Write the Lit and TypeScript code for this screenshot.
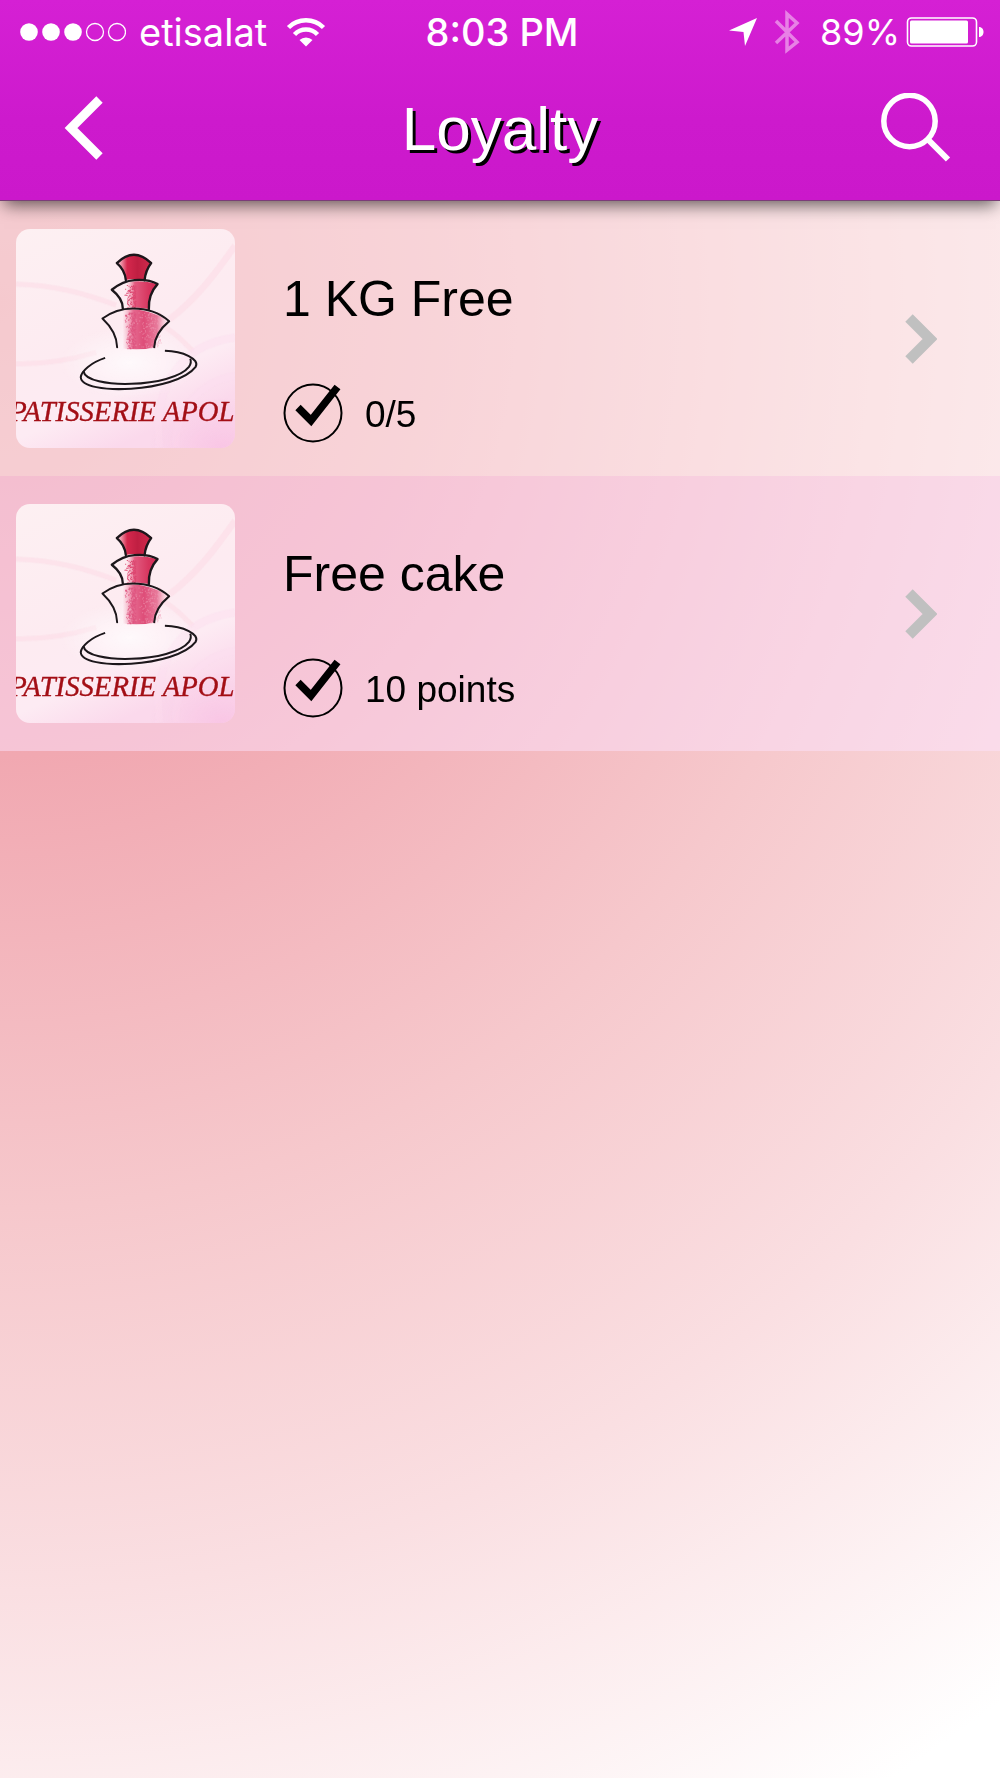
import { LitElement, html, svg, css } from "lit";
import { customElement, property } from "lit/decorators.js";

interface Reward {
  title: string;
  progress: string;
}

const REWARDS: Reward[] = [
  { title: "1 KG Free", progress: "0/5" },
  { title: "Free cake", progress: "10 points" },
];

/* Repeatable pseudo-random speckles for the grainy left edge of a cake tier. */
function speckles(x: number, y: number, w: number, h: number, count: number, seed: number) {
  let s = seed;
  const next = () => {
    s = (s * 1103515245 + 12345) % 2147483648;
    return s / 2147483648;
  };
  let d = "";
  for (let i = 0; i < count; i++) {
    const px = Math.round(x + w * Math.sqrt(next()));
    const py = Math.round(y + h * next());
    d += `M${px} ${py}h3v3h-3z`;
  }
  return d;
}

const TIER_TWO_GRAIN = speckles(324, 168, 34, 68, 150, 7);
const TIER_THREE_GRAIN = speckles(322, 248, 36, 110, 220, 19);
const TIER_LIGHT_GRAIN = speckles(344, 250, 90, 106, 160, 31);

@customElement("patisserie-logo")
export class PatisserieLogo extends LitElement {
  static styles = css`
    :host {
      display: block;
      flex: none;
      width: 219px;
      height: 219px;
      border-radius: 14px;
      overflow: hidden;
    }
    .art {
      display: block;
      width: 100%;
      height: 100%;
    }
    .name {
      font-family: "Liberation Serif", "Times New Roman", serif;
      font-style: italic;
      font-size: 86px;
      fill: #a30f16;
      stroke: #a30f16;
      stroke-width: 1px;
    }
  `;

  render() {
    return html`<svg class="art" viewBox="0 0 656 656" role="img" aria-label="Patisserie logo">
      ${svg`
      <defs>
        <linearGradient id="paper" x1="0" y1="0" x2="0.45" y2="1">
          <stop offset="0" stop-color="#fdf0f2"/>
          <stop offset="0.55" stop-color="#fdebf1"/>
          <stop offset="0.8" stop-color="#fdebf3"/>
          <stop offset="1" stop-color="#fbd9ec"/>
        </linearGradient>
        <radialGradient id="glow">
          <stop offset="0" stop-color="#fff" stop-opacity="0.7"/>
          <stop offset="1" stop-color="#fff" stop-opacity="0"/>
        </radialGradient>
        <radialGradient id="corner">
          <stop offset="0" stop-color="#f8bfe2" stop-opacity="0.75"/>
          <stop offset="1" stop-color="#f8bfe2" stop-opacity="0"/>
        </radialGradient>
        <linearGradient id="t1" x1="0" x2="1">
          <stop offset="0.05" stop-color="#f7c3cf"/>
          <stop offset="0.3" stop-color="#d5284d"/>
          <stop offset="0.6" stop-color="#c01f42"/>
          <stop offset="1" stop-color="#cf2a4c"/>
        </linearGradient>
        <linearGradient id="t2" x1="0" x2="1">
          <stop offset="0.32" stop-color="#f3a9bd" stop-opacity="0"/>
          <stop offset="0.5" stop-color="#e25b80"/>
          <stop offset="0.8" stop-color="#d7365f"/>
          <stop offset="1" stop-color="#d02c54"/>
        </linearGradient>
        <linearGradient id="t3" x1="0" x2="1">
          <stop offset="0.3" stop-color="#f3a9bd" stop-opacity="0"/>
          <stop offset="0.46" stop-color="#e56b90"/>
          <stop offset="0.62" stop-color="#de4d78"/>
          <stop offset="0.82" stop-color="#e87a9b"/>
          <stop offset="0.96" stop-color="#f5bccb" stop-opacity="0.3"/>
        </linearGradient>
      </defs>
      <rect width="656" height="656" fill="url(#paper)"/>
      <g fill="none" stroke="#fcdfe8" stroke-width="15" opacity="0.75">
        <path d="M0 165C120 168 210 195 300 228"/>
        <path d="M440 290C490 320 500 340 530 365"/>
        <path d="M0 404C80 406 170 390 240 370"/>
        <path d="M460 270C540 210 600 130 656 50" stroke-width="20"/>
        <path d="M430 656C410 500 470 350 656 325" stroke="#fbdcee" stroke-width="24" opacity="0.6"/>
        <path d="M480 656C470 560 540 460 656 440" stroke="#fbdcee" stroke-width="24" opacity="0.6"/>
      </g>
      <ellipse cx="620" cy="656" rx="220" ry="150" fill="url(#corner)"/>
      <ellipse cx="340" cy="400" rx="210" ry="110" fill="url(#glow)"/>
      <path d="M302 97Q353 60 405 98Q388 120 385 154Q355 146 329 153Q326 122 302 97Z" fill="url(#t1)"/>
      <path d="M287 182Q340 142 424 165Q396 195 398 240Q360 231 324 238Q320 208 287 182Z" fill="url(#t2)"/>
      <path d="M259 268Q340 210 459 275Q416 312 414 354Q370 366 306 356Q302 308 259 268Z" fill="url(#t3)"/>
      <path d="${TIER_TWO_GRAIN}" fill="#dd4770"/>
      <path d="${TIER_THREE_GRAIN}" fill="#df5580"/>
      <path d="${TIER_LIGHT_GRAIN}" fill="#ee9ab4" opacity="0.7"/>
      <g fill="none" stroke="#1c171b" stroke-width="7" stroke-linecap="round" stroke-linejoin="round">
        <path d="M329 153Q326 122 302 102Q353 52 405 102Q388 124 385 154"/>
        <path d="M320 238Q320 208 287 182Q320 155 355 153Q398 150 424 165Q396 195 398 240"/>
        <path d="M303 354Q302 308 259 268Q300 238 350 238Q415 238 459 276Q416 312 414 354" stroke-width="6"/>
      </g>
      <g fill="none" stroke="#1c171b" stroke-width="6">
        <path d="M267 386C225 400 196 425 194 444C196 500 480 490 538 413C552 390 500 366 446 365"/>
        <path d="M202 426C212 482 470 475 518 413C525 402 525 395 522 388"/>
      </g>
      <text class="name" x="-20" y="575">PATISSERIE APOL</text>
      `}
    </svg>`;
  }
}

@customElement("reward-row")
export class RewardRow extends LitElement {
  @property() heading = "";
  @property() progress = "";

  static styles = css`
    :host {
      display: block;
    }
    .row {
      display: flex;
      box-sizing: border-box;
      min-height: 275px;
      padding: 28px 63px 28px 16px;
      color: #000;
      text-decoration: none;
    }
    .details {
      flex: 1;
      display: flex;
      flex-direction: column;
      gap: 54px;
      padding: 40px 0 0 48px;
    }
    .title {
      font-size: 50px;
      line-height: 60px;
    }
    .progress {
      display: flex;
      align-items: center;
      gap: 22px;
      font-size: 37px;
      line-height: 60px;
    }
    .count {
      padding-top: 4px;
      line-height: 56px;
    }
    .check {
      width: 60px;
      height: 60px;
    }
    .chevron {
      align-self: center;
      width: 32px;
      height: 50px;
    }
  `;

  render() {
    return html`<a class="row" href="#reward">
      <patisserie-logo></patisserie-logo>
      <span class="details">
        <span class="title">${this.heading}</span>
        <span class="progress">
          <svg class="check" viewBox="0 0 60 60" aria-hidden="true">
            <circle cx="30" cy="30" r="28.5" fill="none" stroke="#000" stroke-width="2" />
            <path d="M15 24.500L28 37.500L54.500 4" fill="none" stroke="#000" stroke-width="7.500" />
          </svg>
          <span class="count">${this.progress}</span>
        </span>
      </span>
      <svg class="chevron" viewBox="0 0 32 50" aria-hidden="true">
        <path d="M4 4L25 25L4 46" fill="none" stroke="#c0c0c0" stroke-width="10.500" />
      </svg>
    </a>`;
  }
}

@customElement("app-root")
export class AppRoot extends LitElement {
  static styles = css`
    :host {
      display: block;
      min-height: 100vh;
      font-family: "Liberation Sans", Arial, Helvetica, sans-serif;
      background: radial-gradient(
        ellipse 168% 98% at 0% 17%,
        #ea939d 0%,
        #f1a8b1 26%,
        #f6c8cc 52%,
        #fadfe2 74%,
        #ffffff 100%
      );
    }
    .header {
      position: relative;
      color: #fff;
      background: linear-gradient(#d520d4, #cd1acd 60%, #cb18cb);
      border-bottom: 1px solid #7b3c78;
      box-shadow: 0 8px 16px -4px rgba(0, 0, 0, 0.6);
    }
    .status {
      display: grid;
      grid-template-columns: 1fr auto 1fr;
      align-items: center;
      height: 64px;
      padding: 0 16px 0 20px;
      font-family: Inter, "Liberation Sans", sans-serif;
      font-size: 38px;
      line-height: 64px;
    }
    .carrier,
    .power {
      display: flex;
      align-items: center;
    }
    .carrier {
      gap: 13px;
    }
    .power {
      justify-content: flex-end;
      gap: 10px;
      font-size: 36px;
    }
    .time {
      font-weight: 500;
    }
    .signal {
      width: 106px;
      height: 20px;
    }
    .wifi {
      width: 40px;
      height: 30px;
      margin-left: 6px;
    }
    .arrow {
      width: 30px;
      height: 30px;
    }
    .bluetooth {
      width: 26px;
      height: 44px;
      margin: 0 10px 0 6px;
    }
    .battery {
      width: 78px;
      height: 32px;
      margin-left: -4px;
    }
    .bar {
      display: grid;
      grid-template-columns: 120px 1fr 120px;
      align-items: center;
      height: 136px;
      padding: 0 24px 8px 24px;
      box-sizing: border-box;
    }
    .title {
      margin: 0;
      padding-top: 2px;
      text-align: center;
      font-size: 62px;
      font-weight: 400;
      line-height: 72px;
      text-shadow: 3px 3px 0 #000;
    }
    .tool {
      display: flex;
      align-items: center;
      justify-content: center;
      height: 96px;
      padding: 0;
      border: 0;
      background: none;
      color: inherit;
      cursor: pointer;
    }
    .back {
      width: 40px;
      height: 64px;
    }
    .search {
      width: 70px;
      height: 70px;
    }
    .list {
      margin: 0;
      padding: 0;
      list-style: none;
    }
    .item {
      background: rgba(255, 255, 255, 0.5);
    }
    .item:nth-child(even) {
      background: rgba(251, 225, 251, 0.5);
    }
  `;

  private renderStatus() {
    return html`<div class="status">
      <div class="carrier">
        <svg class="signal" viewBox="0 0 106 20" role="img" aria-label="Signal strength">
          <g fill="#fff">
            <circle cx="9" cy="10" r="8.800" />
            <circle cx="31" cy="10" r="8.800" />
            <circle cx="53" cy="10" r="8.800" />
          </g>
          <g fill="none" stroke="#fff" stroke-width="1.300">
            <circle cx="75" cy="10" r="8.500" />
            <circle cx="97" cy="10" r="8.500" />
          </g>
        </svg>
        <span>etisalat</span>
        <svg class="wifi" viewBox="0 0 40 30" role="img" aria-label="Wi-Fi">
          <path d="M2.500 10.500A25 25 0 0 1 37.500 10.500" fill="none" stroke="#fff" stroke-width="4.500" />
          <path d="M8.500 17.500A16 16 0 0 1 31.500 17.500" fill="none" stroke="#fff" stroke-width="4.500" />
          <path d="M13.500 23A9.500 9.500 0 0 1 26.500 23L20 29.500Z" fill="#fff" />
        </svg>
      </div>
      <span class="time">8:03 PM</span>
      <div class="power">
        <svg class="arrow" viewBox="0 0 30 30" role="img" aria-label="Location in use">
          <path d="M29 1L17 29L15.500 15L1 13.500Z" fill="#fff" />
        </svg>
        <svg class="bluetooth" viewBox="0 0 26 44" role="img" aria-label="Bluetooth">
          <path d="M2 11L23 32L13 40V4L23 13L2 33" fill="none" stroke="#e881e6" stroke-width="3.500" />
        </svg>
        <span>89%</span>
        <svg class="battery" viewBox="0 0 78 32" role="img" aria-label="Battery">
          <rect x="1.500" y="2" width="69" height="28" rx="4" fill="none" stroke="#fff" stroke-width="1.600" />
          <rect x="4" y="4.500" width="58" height="23" rx="1.500" fill="#fff" />
          <path d="M73 11C79 11 79 21 73 21Z" fill="#fff" />
        </svg>
      </div>
    </div>`;
  }

  render() {
    return html`
      <header class="header">
        ${this.renderStatus()}
        <div class="bar">
          <button class="tool" aria-label="Back">
            <svg class="back" viewBox="0 0 40 64" aria-hidden="true">
              <path d="M35.500 3.500L7 32L35.500 60.500" fill="none" stroke="#fff" stroke-width="9" />
            </svg>
          </button>
          <h1 class="title">Loyalty</h1>
          <button class="tool" aria-label="Search">
            <svg class="search" viewBox="0 0 70 70" fill="none" stroke="#fff" aria-hidden="true">
              <circle cx="28.500" cy="28" r="25.700" stroke-width="5.500" />
              <path d="M47 46.500L67 66.500" stroke-width="6" />
            </svg>
          </button>
        </div>
      </header>
      <ul class="list">
        ${REWARDS.map(
          (r) => html`<li class="item">
            <reward-row .heading=${r.title} .progress=${r.progress}></reward-row>
          </li>`
        )}
      </ul>
    `;
  }
}
